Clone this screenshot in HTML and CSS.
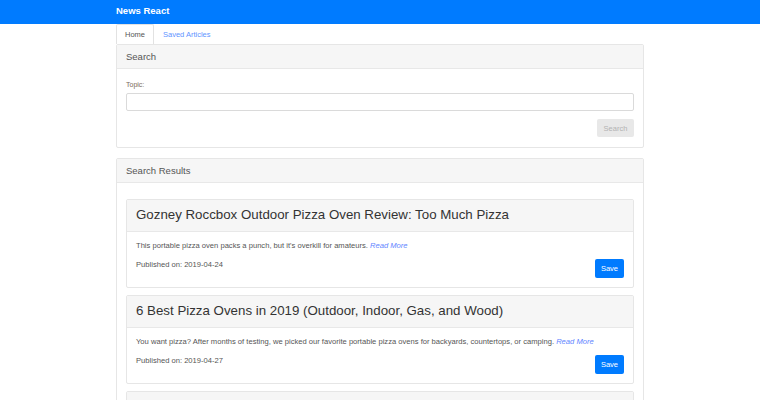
FILE: index.html
```html
<!DOCTYPE html>
<html>
<head>
<meta charset="utf-8">
<title>News React</title>
<link rel="stylesheet" href="styles.css">
</head>
<body>
<nav class="navbar">
  <div class="container">
    <span class="brand">News React</span>
  </div>
</nav>
<main class="container">
  <ul class="tabs">
    <li class="tab active">Home</li>
    <li class="tab"><a href="#">Saved Articles</a></li>
  </ul>
  <section class="card search-card">
    <div class="card-header">Search</div>
    <div class="card-body">
      <label class="label" for="topic">Topic:</label>
      <input id="topic" class="input" type="text">
      <div class="actions">
        <button class="btn btn-disabled" disabled>Search</button>
      </div>
    </div>
  </section>
  <section class="card results-card">
    <div class="card-header">Search Results</div>
    <div class="card-body results-body">
      <article class="card article">
        <h3 class="article-title">Gozney Roccbox Outdoor Pizza Oven Review: Too Much Pizza</h3>
        <div class="article-body">
          <p class="summary">This portable pizza oven packs a punch, but it's overkill for amateurs. <a href="#" class="read-more">Read More</a></p>
          <div class="meta-row">
            <span class="published">Published on: 2019-04-24</span>
            <button class="btn btn-primary">Save</button>
          </div>
        </div>
      </article>
      <article class="card article">
        <h3 class="article-title">6 Best Pizza Ovens in 2019 (Outdoor, Indoor, Gas, and Wood)</h3>
        <div class="article-body">
          <p class="summary">You want pizza? After months of testing, we picked our favorite portable pizza ovens for backyards, countertops, or camping. <a href="#" class="read-more">Read More</a></p>
          <div class="meta-row">
            <span class="published">Published on: 2019-04-27</span>
            <button class="btn btn-primary">Save</button>
          </div>
        </div>
      </article>
      <article class="card article">
        <h3 class="article-title">The Best Pizza Ovens You Can Buy</h3>
        <div class="article-body">
          <p class="summary">Pizza ovens for every kitchen and backyard. <a href="#" class="read-more">Read More</a></p>
          <div class="meta-row">
            <span class="published">Published on: 2019-04-20</span>
            <button class="btn btn-primary">Save</button>
          </div>
        </div>
      </article>
    </div>
  </section>
</main>
</body>
</html>
```

FILE: styles.css
```css
* { box-sizing: border-box; }
html, body { margin: 0; padding: 0; }
body {
  font-family: Arial, "Liberation Sans", Helvetica, sans-serif;
  font-size: 7.6px;
  line-height: 12px;
  color: #555;
  background: #fff;
}
.container {
  width: 528px;
  margin: 0 auto;
}
.navbar {
  background: #007bff;
  height: 24px;
}
.navbar .container {
  display: flex;
  align-items: center;
  height: 24px;
}
.brand {
  color: #fff;
  font-weight: bold;
  font-size: 9.5px;
  line-height: 14px;
  margin-top: -2px;
}
.tabs {
  list-style: none;
  margin: 0;
  padding: 0;
  display: flex;
  height: 20px;
}
.tab {
  padding: 0 8px;
  line-height: 20px;
  border: 1px solid transparent;
  border-bottom: 0;
  color: #555;
  font-size: 7.5px;
}
.tab.active {
  border-color: #e2e2e2;
  border-radius: 2px 2px 0 0;
  background: #fff;
}
.tab a {
  color: #5f95ff;
  text-decoration: none;
}
.card {
  border: 1px solid #e6e6e6;
  border-radius: 2px;
  background: #fff;
}
.card-header {
  background: #f6f6f6;
  border-bottom: 1px solid #e8e8e8;
  height: 24px;
  line-height: 23px;
  padding: 0 9px;
  font-size: 9.5px;
  color: #555;
}
.card-body {
  padding: 10px 9px;
}
.label {
  display: block;
  font-size: 7px;
  line-height: 11px;
  color: #7a6a5a;
  margin-bottom: 3px;
}
.input {
  display: block;
  width: 100%;
  height: 18px;
  border: 1px solid #dadada;
  border-radius: 2px;
  margin: 0;
  padding: 0 6px;
  font: inherit;
}
.actions {
  display: flex;
  justify-content: flex-end;
  margin-top: 8px;
}
.btn {
  font-family: inherit;
  font-size: 7.5px;
  border: 0;
  border-radius: 2px;
  padding: 0 6px;
  height: 18px;
}
.btn-disabled {
  background: #e8e8e8;
  color: #b3b3b3;
  width: 37px;
}
.btn-primary {
  background: #007bff;
  color: #fff;
  height: 19px;
  width: 29px;
  padding: 0;
}
.search-card {
  margin-bottom: 10px;
}
.results-body {
  padding: 16px 9px;
}
.article {
  margin-bottom: 7px;
}
.article-title {
  margin: 0;
  background: #f6f6f6;
  border-bottom: 1px solid #e8e8e8;
  font-weight: normal;
  font-size: 13.3px;
  line-height: 30px;
  height: 32px;
  padding: 0 9px;
  color: #333;
}
.article-body {
  padding: 8px 9px 9px;
}
.summary {
  margin: 0;
  line-height: 12px;
}
.read-more {
  font-style: italic;
  color: #5f85ff;
  text-decoration: none;
}
.meta-row {
  display: flex;
  justify-content: space-between;
  align-items: flex-start;
  margin-top: 7px;
}
.published {
  line-height: 12px;
  margin-top: 0;
}
```
